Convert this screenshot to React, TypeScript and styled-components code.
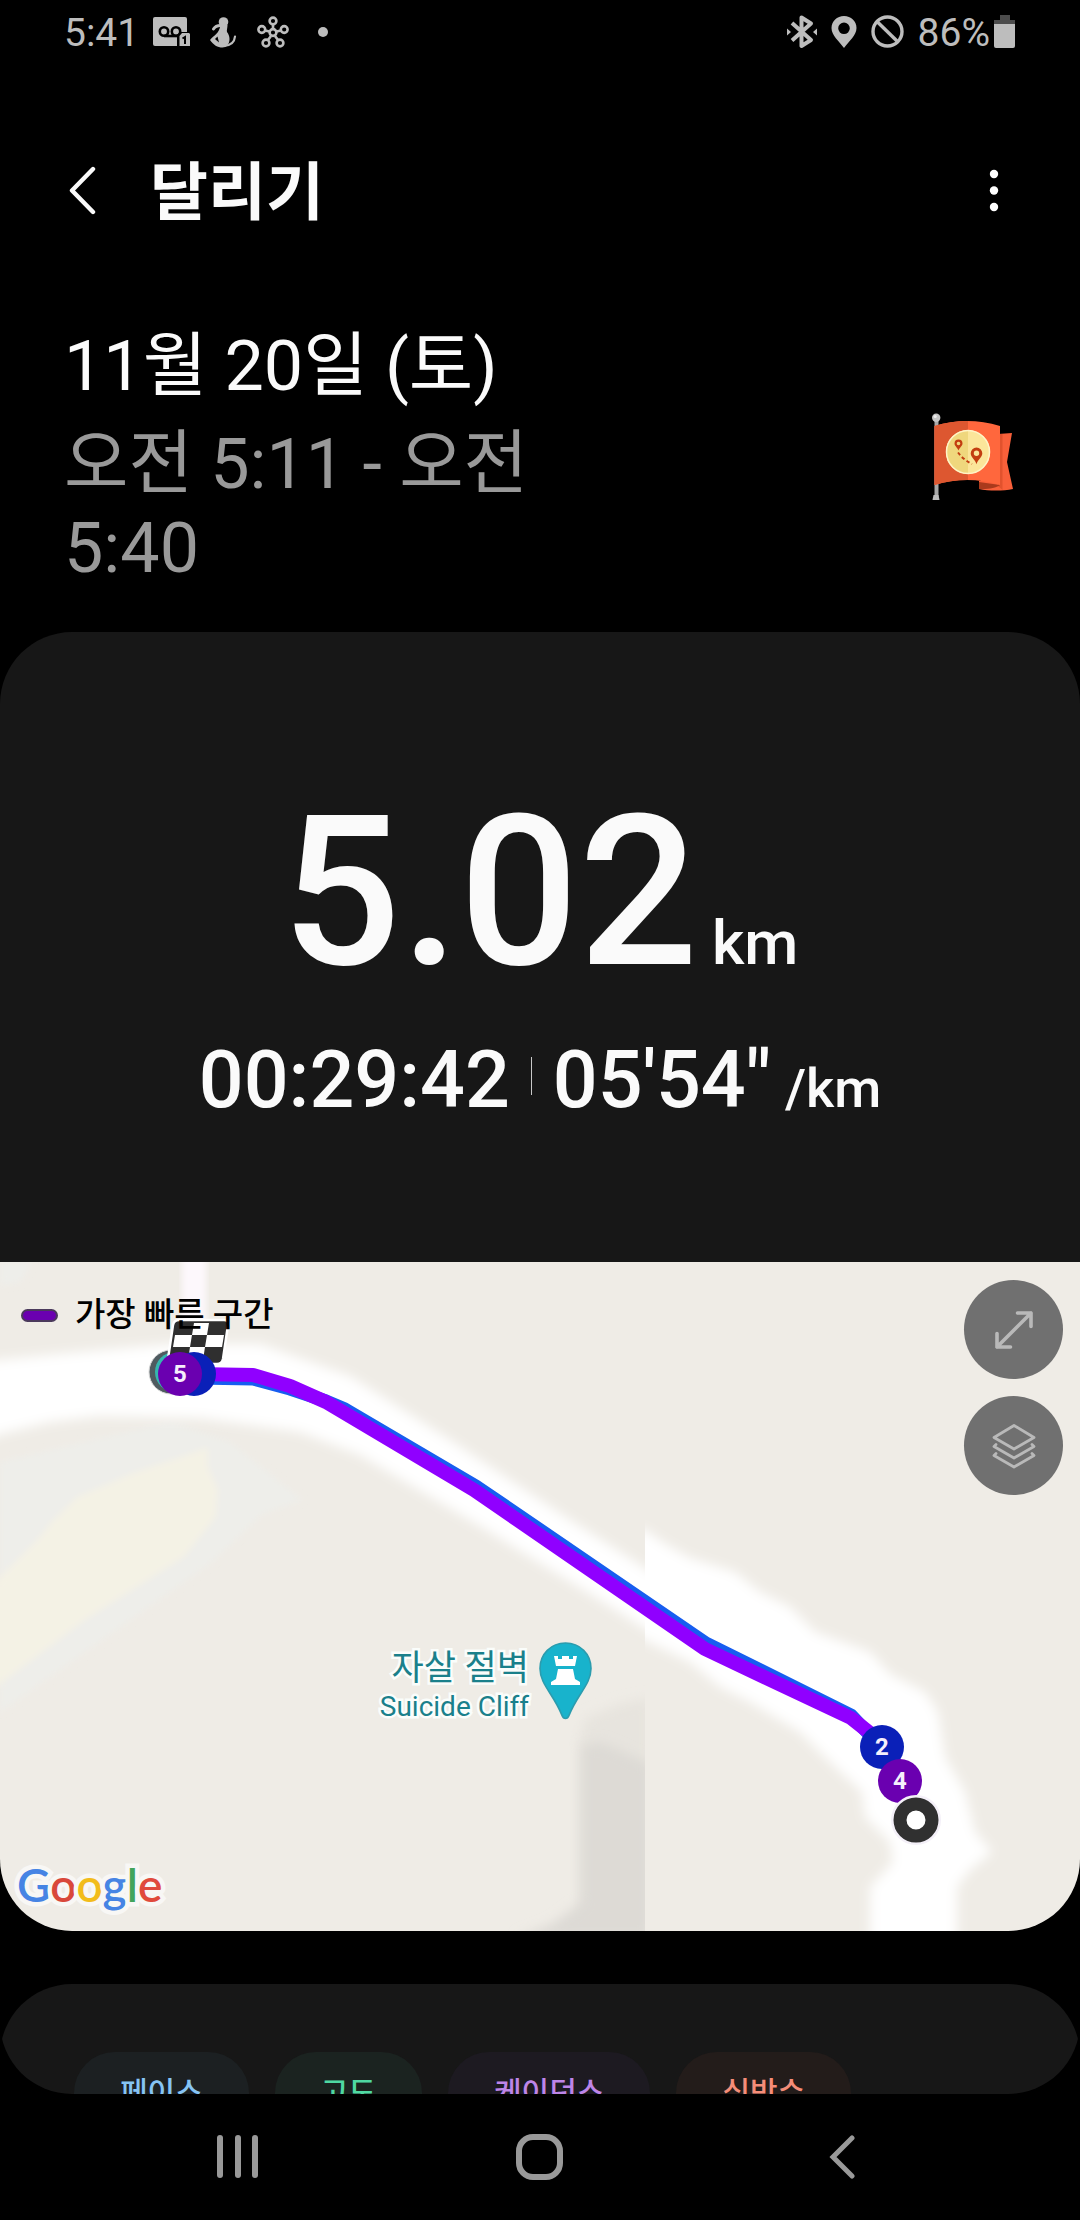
import React from "react";
import styled, { createGlobalStyle } from "styled-components";

const GlobalStyle = createGlobalStyle`
  *, *::before, *::after { box-sizing: border-box; }
  body {
    margin: 0;
    background: #000;
    color: #fafafa;
    font-family: Roboto, "Noto Sans CJK KR", sans-serif;
  }
  button { margin: 0; padding: 0; border: 0; background: none; color: inherit; font: inherit; cursor: pointer; }
  h1, h2, p { margin: 0; font-size: inherit; font-weight: inherit; }
  svg { display: block; }
`;

const Screen = styled.div`
  display: flex;
  flex-direction: column;
  height: 100vh;
  overflow: hidden;
`;

/* Status bar */
const StatusBar = styled.div`
  flex: none;
  display: flex;
  justify-content: space-between;
  align-items: center;
  height: 64px;
  padding: 0 64px;
  color: #bdbdbd;
  font-size: 39px;
  line-height: 48px;
`;

const StatusGroup = styled.div<{ $gap: number }>`
  display: flex;
  align-items: center;
  gap: ${(p) => p.$gap}px;
`;

const StatusText = styled.span`
  padding-top: 2px;
`;

/* Header */
const Header = styled.header`
  flex: none;
  display: flex;
  align-items: center;
  height: 190px;
  padding: 64px 60px 0 56px;
`;

const IconButton = styled.button`
  display: flex;
  align-items: center;
  justify-content: center;
  width: 52px;
  height: 72px;
`;

const Title = styled.h1`
  flex: 1;
  padding: 4px 0 0 42px;
  font-size: 63px;
  line-height: 80px;
  font-weight: 700;
`;

/* Scrolling content, clipped by the rounded bottom of the window */
const Viewport = styled.main`
  flex: 1;
  min-height: 0;
  overflow: hidden;
  border-radius: 0 0 72px 72px;
`;

const Summary = styled.section`
  display: flex;
  align-items: center;
  justify-content: space-between;
  padding: 70px 64px 42px;
  font-size: 70px;
  line-height: 84px;
  word-break: keep-all;
`;

const When = styled.div`
  display: flex;
  flex-direction: column;
  gap: 14px;
  width: 50%;
`;

const TimeRange = styled.p`
  color: #999;
`;

const WorkoutCard = styled.section`
  overflow: hidden;
  border-radius: 72px;
  background: #171717;
`;

const Stats = styled.div`
  display: flex;
  flex-direction: column;
  align-items: center;
  gap: 40px;
  padding: 160px 24px 134px;
  font-weight: 500;
`;

const Distance = styled.p`
  font-size: 210px;
  line-height: 200px;
`;

const Unit = styled.span<{ $size: number }>`
  margin-left: 14px;
  font-size: ${(p) => p.$size}px;
  line-height: 64px;
`;

const PaceRow = styled.div`
  display: flex;
  align-items: center;
  gap: 21px;
  font-size: 79px;
  line-height: 96px;
`;

const Divider = styled.span`
  width: 1px;
  height: 38px;
  margin-bottom: 8px;
  background: #c8c8c8;
`;

/* Map */
const MapArea = styled.div`
  position: relative;
  height: 669px;
  overflow: hidden;
  background: #efece6;
`;

const MapCanvas = styled.svg`
  position: absolute;
  top: 0;
  left: 0;
`;

const MapPin = styled.span<{ $x: number; $y: number; $color: string }>`
  position: absolute;
  left: ${(p) => p.$x}px;
  top: ${(p) => p.$y}px;
  width: 44px;
  height: 44px;
  border-radius: 50%;
  background: ${(p) => p.$color};
  color: #f5effc;
  font-size: 24px;
  line-height: 44px;
  font-weight: 700;
  text-align: center;
  transform: translate(-50%, -50%);
`;

const Poi = styled.div`
  position: absolute;
  left: 372px;
  top: 380px;
  display: flex;
  gap: 10px;
`;

const PoiName = styled.div`
  display: flex;
  flex-direction: column;
  align-items: flex-end;
  width: 157px;
  padding-top: 8px;
  color: #1a808b;
  font-size: 28px;
  line-height: 38px;
  white-space: nowrap;
  -webkit-text-stroke: 5px #fafdfb;
  paint-order: stroke fill;
`;

const PoiKorean = styled.span`
  font-size: 35px;
`;

const Legend = styled.div`
  position: absolute;
  top: 33px;
  left: 21px;
  display: flex;
  align-items: center;
  gap: 17px;
  color: #000;
  font-size: 33px;
  line-height: 40px;
  font-weight: 500;
`;

const LegendSwatch = styled.span`
  width: 37px;
  height: 13px;
  border: 2px solid #4b3a5c;
  border-radius: 7px;
  background: #6a00b0;
`;

const MapControls = styled.div`
  position: absolute;
  top: 18px;
  right: 17px;
  display: flex;
  flex-direction: column;
  gap: 17px;
`;

const RoundButton = styled.button`
  display: flex;
  align-items: center;
  justify-content: center;
  width: 99px;
  height: 99px;
  border-radius: 50%;
  background: #707070;
  color: #b9b9b9;
`;

const Brand = styled.span`
  position: absolute;
  left: 17px;
  bottom: 18px;
  font-family: Lato, sans-serif;
  font-size: 46px;
  line-height: 56px;
  font-weight: 600;
  -webkit-text-stroke: 9px #f8f7f5;
  paint-order: stroke fill;
`;

const Letter = styled.span<{ $color: string }>`
  color: ${(p) => p.$color};
`;

/* Chart card */
const ChartCard = styled.section`
  margin-top: 53px;
  min-height: 400px;
  padding: 68px 74px;
  border-radius: 72px;
  background: #171717;
`;

const Chips = styled.div`
  display: flex;
  gap: 26px;
`;

const Chip = styled.button<{ $color: string; $fill: string }>`
  height: 82px;
  padding: 0 46px;
  border-radius: 41px;
  background: ${(p) => p.$fill};
  color: ${(p) => p.$color};
  font-size: 30px;
  line-height: 40px;
  font-weight: 500;
  white-space: nowrap;
`;

/* System navigation */
const NavBar = styled.nav`
  flex: none;
  display: grid;
  grid-template-columns: repeat(3, 1fr);
  height: 126px;
  padding: 0 87px;
  color: #999;
`;

const NavButton = styled.button`
  display: flex;
  align-items: center;
  justify-content: center;
`;

const VoicemailIcon = () => (
  <svg width="37" height="30" viewBox="0 0 37 30">
    <rect width="34" height="29" rx="2" fill="#bdbdbd" />
    <g fill="none" stroke="#000" strokeWidth="2.6">
      <circle cx="11" cy="14.500" r="4.200" />
      <circle cx="23" cy="14.500" r="4.200" />
      <path d="M11 19h15" />
    </g>
    <path d="M24 30V18l3-3h10v15z" fill="#000" />
    <path d="M26.500 29V19l2.500-3h7l1 1v12z" fill="#bdbdbd" />
    <path d="M29.500 21.500l2.500-1.500v7" fill="none" stroke="#000" strokeWidth="2" />
  </svg>
);

const PersonIcon = () => (
  <svg width="27" height="31" viewBox="0 0 27 31">
    <circle cx="13.500" cy="5" r="4.800" fill="#bdbdbd" />
    <path d="M10.500 8h7c0 3-1 5-.500 7 1.500 2 2.500 4 2.500 7 0 5-3 8.500-7 8.500C7.500 30.500 3.500 28 0 23c4-5 9-6 10.500-15z" fill="#bdbdbd" />
    <path d="M3.500 12c1.500-2.500 3.500-3.500 7-3.500" fill="none" stroke="#bdbdbd" strokeWidth="3" strokeLinecap="round" />
    <path d="M5 22l2.500-2.500 1.500 6z" fill="#000" />
    <path d="M25 19.500c-.500 6-5 9-11 9.500" fill="none" stroke="#bdbdbd" strokeWidth="2.200" strokeLinecap="round" />
  </svg>
);

const NetworkIcon = () => (
  <svg width="32" height="32" viewBox="0 0 32 32" fill="none" stroke="#bdbdbd" strokeWidth="2.600">
    <circle cx="16" cy="16.500" r="3.400" />
    <circle cx="16" cy="5" r="3.400" />
    <circle cx="4.800" cy="13.500" r="3.400" />
    <circle cx="27.200" cy="13.500" r="3.400" />
    <circle cx="9" cy="27" r="3.400" />
    <circle cx="23" cy="27" r="3.400" />
    <path d="M16 8.500v4.500M8 14.500l4.500 1M24 14.500l-4.500 1M11 24l3-4M21 24l-3-4" />
  </svg>
);

const BluetoothIcon = () => (
  <svg width="30" height="34" viewBox="0 0 30 34">
    <path d="M5 8l19 17-9.500 6V2.500L24 8.500 5 25.500" fill="none" stroke="#bdbdbd" strokeWidth="4" strokeLinejoin="round" />
    <path d="M0 13.500l4 3.500-4 3.500zM30 13.500l-4 3.500 4 3.500z" fill="#bdbdbd" />
  </svg>
);

const LocationIcon = () => (
  <svg width="26" height="32" viewBox="0 0 26 32">
    <path fillRule="evenodd" d="M13 0C6 0 .500 5.200.500 12c0 7.500 7.500 13 12.500 20 5-7 12.500-12.500 12.500-20C25.500 5.200 20 0 13 0zm0 6.500a5.800 5.800 0 110 11.600 5.800 5.800 0 010-11.600z" fill="#bdbdbd" />
  </svg>
);

const BlockedIcon = () => (
  <svg width="33" height="34" viewBox="0 0 33 34" fill="none" stroke="#bdbdbd" strokeWidth="3.400">
    <circle cx="16.500" cy="16.500" r="14.500" />
    <path d="M6.500 7l20 19.500" />
  </svg>
);

const BatteryIcon = () => (
  <svg width="22" height="34" viewBox="0 0 22 34">
    <path d="M6 0h10v5h5v5H0V5h6z" fill="#4c4c4c" />
    <path d="M0 9h21v22a2 2 0 01-2 2H2a2 2 0 01-2-2z" fill="#bdbdbd" />
  </svg>
);

const RouteBadge = () => (
  <svg width="84" height="88" viewBox="0 0 84 88" role="img" aria-label="경로 배지">
    <rect x="2.500" y="6" width="4" height="78" fill="#a9a9a9" />
    <path d="M1.500 82h5l1 5H.500z" fill="#bdbdbd" />
    <circle cx="4.200" cy="4.800" r="4.200" fill="#c4c4c4" />
    <circle cx="3.200" cy="3.500" r="1.600" fill="#eee" />
    <path d="M66 21l14-1-5 29 6 27c-10 2-24 2-34 0v-8h19z" fill="#f9603a" />
    <path d="M66 21h4.500v56l-4.500-4z" fill="#e2522d" />
    <path d="M47 69l21 3c-4 3-12 4.500-21 4z" fill="#a93a1c" />
    <path d="M2.500 13Q35 3 68 13v59Q35 62 2.500 72z" fill="#ff673d" />
    <path d="M2.500 13Q19 8 36 8v59Q19 67 2.500 72z" fill="#dd5730" />
    <circle cx="36" cy="39" r="22" fill="#fbe59a" />
    <path d="M36 17a22 22 0 000 44z" fill="#efd77d" />
    <circle cx="36" cy="39" r="21.500" fill="none" stroke="#fff3c6" strokeWidth="1.500" />
    <path fillRule="evenodd" d="M26.500 26.500a4 4 0 00-4 4c0 2.500 3 4 4 7 1-3 4-4.500 4-7a4 4 0 00-4-4zm0 2.200a1.800 1.800 0 110 3.600 1.800 1.800 0 010-3.600z" fill="#c33d10" />
    <path fillRule="evenodd" d="M44.500 34.500a5.800 5.800 0 00-5.800 5.800c0 4 4.500 6 5.800 11 1.300-5 5.800-7 5.800-11a5.800 5.800 0 00-5.800-5.800zm0 3a2.700 2.700 0 110 5.400 2.700 2.700 0 010-5.400z" fill="#c33d10" />
    <path d="M26 39.500c3 4 7 8 14 11.500" fill="none" stroke="#c33d10" strokeWidth="2" strokeDasharray="3.500 2.500" />
  </svg>
);

const routePoints = "196,112 253,113 290,124 326,140 474,228 705,387 851,456 880,479";
const shadowPoints = "196,116 253,117 290,127 326,139 345,147 476,224 706,381 851,453 880,484";

const MapDrawing = () => (
  <MapCanvas width="1080" height="669" viewBox="0 0 1080 669" aria-hidden="true">
    <defs>
      <filter id="soft" x="-10%" y="-10%" width="120%" height="120%">
        <feGaussianBlur stdDeviation="6" />
      </filter>
      <filter id="faint" x="-10%" y="-10%" width="120%" height="120%">
        <feGaussianBlur stdDeviation="3" />
      </filter>
      <clipPath id="leftTile"><rect width="645" height="669" /></clipPath>
      <clipPath id="rightTile"><rect x="645" width="435" height="669" /></clipPath>
    </defs>
    <g clipPath="url(#leftTile)">
      <g filter="url(#faint)">
        <path d="M0 0h32L20 20 0 24zM0 200l170-40 60 20 72 58-40 14-50 48-212 150z" fill="#eeeeea" />
        <path d="M208 185l-28 10-47 16-56 24-24 23-16 20L-5 320v106l90-68 99-63 32-40 2-28-10-22z" fill="#f4f2e5" />
      </g>
      <path d="M182 -10h24V90h-24z" fill="#fdf8fc" filter="url(#faint)" />
      <path d="M-20 100L60 92 170 82H260L350 114 450 178 570 258 685 332V392L600 338 480 264 360 193 300 170 200 156 100 154 50 160 0 172 -40 190z" fill="#fff" filter="url(#soft)" />
      <path d="M650 436l-30 6-34 14-8 24v180h72z" fill="#e7e4de" filter="url(#soft)" />
      <path d="M650 502L620 488 600 480 582 484V640L552 662 516 676H650z" fill="#dddad5" filter="url(#soft)" />
    </g>
    <g clipPath="url(#rightTile)">
      <path d="M620 262L645 268 665 282 690 296 735 310 760 330 790 345 815 370 870 390 890 412 925 430 938 450 945 495 965 530 975 570 992 590 970 608 957 625V690H870V625L893 600 890 580 865 555 862 530 830 500 800 470 750 440 720 425 690 400 645 378 620 370z" fill="#fff" filter="url(#soft)" />
    </g>
    <polyline points={shadowPoints} fill="none" stroke="#175df0" strokeWidth="13" strokeLinejoin="round" />
    <polyline points={routePoints} fill="none" stroke="#9000ff" strokeWidth="14" strokeLinejoin="round" />
    <circle cx="171" cy="110" r="22" fill="#4f5b60" stroke="#d8d8d8" strokeWidth="1" />
    <circle cx="175" cy="110" r="20" fill="#35b6b0" />
    <g>
      <path d="M179 58h45q5 0 4 5l-5 34q-1 5-6 5h-45q-5 0-4-5l5-34q1-5 6-5z" fill="#2f2f2f" stroke="#fff" strokeWidth="2.500" />
      <path d="M194 61h15l-2 12h-15zM175 73h17l-2 12h-17zM207 73h17l-2 12h-17zM190 85h15l-2 13h-15z" fill="#fff" />
    </g>
    <circle cx="194" cy="112" r="22" fill="#0a20b8" />
  </MapCanvas>
);

const StartRing = () => (
  <MapCanvas width="1080" height="669" viewBox="0 0 1080 669" aria-hidden="true">
    <circle cx="916" cy="558" r="16" fill="#fff" stroke="#f4f0f8" strokeWidth="18" />
    <circle cx="916" cy="558" r="16" fill="#fff" stroke="#303030" strokeWidth="13" />
  </MapCanvas>
);

const CastlePin = () => (
  <svg width="53" height="78" viewBox="0 0 53 78" aria-hidden="true">
    <path d="M26.500 1C12 1 1 12 1 26.500c0 16 14 26 22 47 1.500 4 5.500 4 7 0 8-21 22-31 22-47C52 12 41 1 26.500 1z" fill="#18b3cc" stroke="#2b9cae" strokeWidth="1.600" />
    <path d="M15 14h4v3h4v-3h7v3h4v-3h4l-2 10H17zM19 27h15l2 10 5 3v3H12v-3l5-3z" fill="#fff" />
  </svg>
);

const brandLetters: Array<[string, string]> = [
  ["G", "#4684e4"],
  ["o", "#d9483b"],
  ["o", "#f2bc1b"],
  ["g", "#4684e4"],
  ["l", "#42a45b"],
  ["e", "#e04a3c"],
];

const chips = [
  { label: "페이스", color: "#86c4f4", fill: "#1c2022" },
  { label: "고도", color: "#4fd8a2", fill: "#1b2320" },
  { label: "케이던스", color: "#bd85e8", fill: "#1d1a21" },
  { label: "심박수", color: "#f58d78", fill: "#231c1a" },
];

export default function App() {
  return (
    <>
      <GlobalStyle />
      <Screen>
        <StatusBar>
          <StatusGroup $gap={14}>
            <StatusText>5:41</StatusText>
            <StatusGroup $gap={20}>
              <VoicemailIcon />
              <PersonIcon />
              <NetworkIcon />
              <svg width="30" height="10" viewBox="0 0 30 10">
                <circle cx="14" cy="5" r="5" fill="#bdbdbd" />
              </svg>
            </StatusGroup>
          </StatusGroup>
          <StatusGroup $gap={4}>
            <StatusGroup $gap={14}>
              <BluetoothIcon />
              <LocationIcon />
              <BlockedIcon />
              <StatusText>86%</StatusText>
            </StatusGroup>
            <BatteryIcon />
          </StatusGroup>
        </StatusBar>

        <Header>
          <IconButton aria-label="뒤로">
            <svg width="28" height="50" viewBox="0 0 28 50" fill="none" stroke="#fafafa" strokeWidth="4.400" strokeLinecap="round" strokeLinejoin="round">
              <path d="M25 3L4 24.500 25 46" />
            </svg>
          </IconButton>
          <Title>달리기</Title>
          <IconButton aria-label="더보기">
            <svg width="10" height="44" viewBox="0 0 10 44" fill="#fff">
              <circle cx="5" cy="5" r="4.200" />
              <circle cx="5" cy="21.500" r="4.200" />
              <circle cx="5" cy="38" r="4.200" />
            </svg>
          </IconButton>
        </Header>

        <Viewport>
          <Summary>
            <When>
              <h2>11월 20일 (토)</h2>
              <TimeRange>오전 5:11 - 오전 5:40</TimeRange>
            </When>
            <RouteBadge />
          </Summary>

          <WorkoutCard>
            <Stats>
              <Distance>
                5.02
                <Unit $size={62}>km</Unit>
              </Distance>
              <PaceRow>
                <span>00:29:42</span>
                <Divider />
                <span>
                  05'54"
                  <Unit $size={54}>/km</Unit>
                </span>
              </PaceRow>
            </Stats>

            <MapArea>
              <MapDrawing />
              <MapPin $x={180} $y={112} $color="#6a00b0">5</MapPin>
              <MapPin $x={882} $y={485} $color="#0a20b8">2</MapPin>
              <MapPin $x={900} $y={519} $color="#6a00b0">4</MapPin>
              <StartRing />
              <Poi>
                <PoiName>
                  <PoiKorean>자살 절벽</PoiKorean>
                  <span>Suicide Cliff</span>
                </PoiName>
                <CastlePin />
              </Poi>
              <Legend>
                <LegendSwatch />
                <span>가장 빠른 구간</span>
              </Legend>
              <MapControls>
                <RoundButton aria-label="지도 확대">
                  <svg width="42" height="42" viewBox="0 0 42 42" fill="none" stroke="currentColor" strokeWidth="3.600" strokeLinecap="round" strokeLinejoin="round">
                    <path d="M4 38L38 4M24.500 4H38v13.500M4 24.500V38h13.500" />
                  </svg>
                </RoundButton>
                <RoundButton aria-label="지도 유형">
                  <svg width="44" height="46" viewBox="0 0 44 46" fill="none" stroke="currentColor" strokeWidth="2.800" strokeLinecap="round" strokeLinejoin="round">
                    <path d="M22 2.500L42 14.500 22 26 2 14.500z" />
                    <path d="M4 21.500l-2 2 20 11.500 20-11.500-2-2" />
                    <path d="M4 30.500l-2 2L22 44l20-11.500-2-2" />
                  </svg>
                </RoundButton>
              </MapControls>
              <Brand>
                {brandLetters.map(([char, color], i) => (
                  <Letter key={i} $color={color}>{char}</Letter>
                ))}
              </Brand>
            </MapArea>
          </WorkoutCard>

          <ChartCard>
            <Chips>
              {chips.map((c) => (
                <Chip key={c.label} $color={c.color} $fill={c.fill}>{c.label}</Chip>
              ))}
            </Chips>
          </ChartCard>
        </Viewport>

        <NavBar>
          <NavButton aria-label="최근 앱">
            <svg width="42" height="44" viewBox="0 0 42 44" fill="currentColor">
              <rect x="0" width="6" height="43" rx="3" />
              <rect x="18" width="6" height="43" rx="3" />
              <rect x="35" width="6" height="43" rx="3" />
            </svg>
          </NavButton>
          <NavButton aria-label="홈">
            <svg width="48" height="47" viewBox="0 0 48 47" fill="none" stroke="currentColor" strokeWidth="6">
              <rect x="3" y="3" width="41" height="40" rx="14" />
            </svg>
          </NavButton>
          <NavButton aria-label="뒤로 가기">
            <svg width="28" height="44" viewBox="0 0 28 44" fill="none" stroke="currentColor" strokeWidth="5" strokeLinecap="round">
              <path d="M24 3L5 22l19 19" />
            </svg>
          </NavButton>
        </NavBar>
      </Screen>
    </>
  );
}
